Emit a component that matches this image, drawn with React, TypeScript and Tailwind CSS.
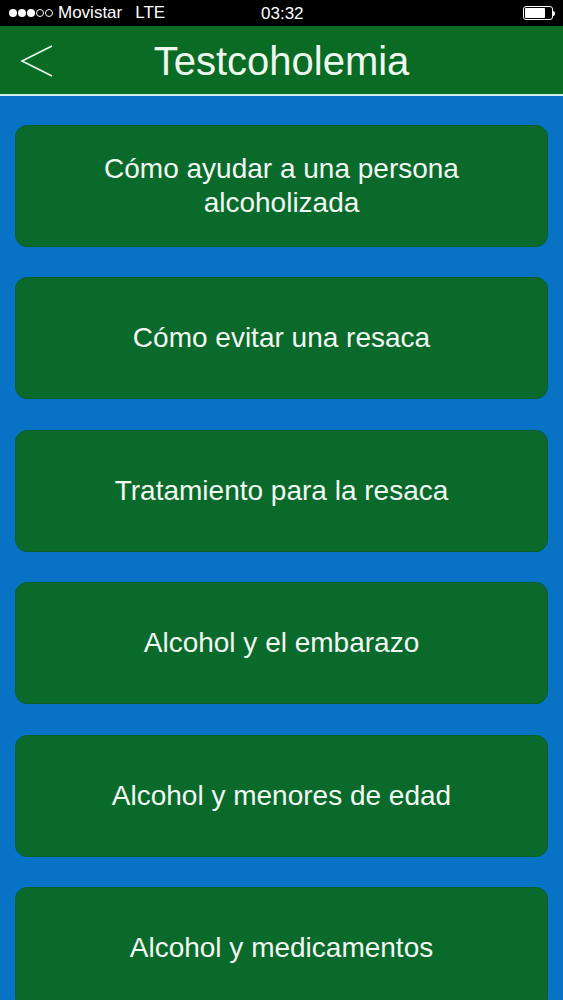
const items = [
  "Cómo ayudar a una persona alcoholizada",
  "Cómo evitar una resaca",
  "Tratamiento para la resaca",
  "Alcohol y el embarazo",
  "Alcohol y menores de edad",
  "Alcohol y medicamentos",
];

function StatusBar() {
  return (
    <div className="relative flex h-[26px] items-center bg-black pl-[9px] text-[17px] text-white">
      <div className="flex items-center gap-[1px]">
        {[0, 1, 2].map((i) => (
          <span key={i} className="h-[8px] w-[8px] rounded-full bg-white" />
        ))}
        {[0, 1].map((i) => (
          <span key={i} className="h-[8px] w-[8px] rounded-full border border-white" />
        ))}
      </div>
      <span className="ml-[5px]">Movistar</span>
      <span className="ml-[13px]">LTE</span>
      <span className="absolute left-[261px] top-[1px]">03:32</span>
      <div className="ml-auto mr-[8px] flex items-center">
        <div className="flex h-[14px] w-[30px] items-center rounded-[3px] border border-white p-[1px]">
          <div className="h-full w-[20px] rounded-[1px] bg-white" />
        </div>
        <div className="h-[5px] w-[2px] rounded-r-sm bg-white" />
      </div>
    </div>
  );
}

export default function App() {
  return (
    <div className="h-[1000px] w-[563px] overflow-hidden bg-[#0872c4] font-['Liberation_Sans',Arial,sans-serif]">
      <StatusBar />
      <div className="relative flex h-[68px] items-center justify-center bg-[#0a6b24]">
        <svg
          className="absolute left-[20px] top-[18px]"
          width="34"
          height="34"
          viewBox="0 0 34 34"
          fill="none"
          stroke="#eef8ee"
          strokeWidth="1.6"
        >
          <path d="M32 2 L2 17 L32 32" />
        </svg>
        <span className="pt-[2px] text-[40px] text-[#eef8ee]">Testcoholemia</span>
      </div>
      <div className="h-[2px] bg-[#cdeeea]" />
      <div className="flex flex-col gap-[30.4px] px-[15px] pt-[29px]">
        {items.map((t) => (
          <div
            key={t}
            className="flex h-[122px] shrink-0 items-center justify-center rounded-[12px] border border-[#0a5e2a] bg-[#0a6a2b] px-[50px] text-center text-[28px] leading-[34px] text-[#f2f8f2]"
          >
            {t}
          </div>
        ))}
      </div>
    </div>
  );
}
